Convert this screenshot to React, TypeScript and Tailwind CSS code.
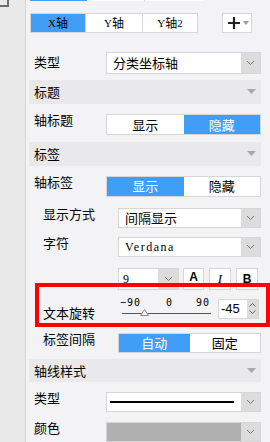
import React from 'react';

const Chevron: React.FC = () => (
  <svg width="9" height="6" viewBox="0 0 9 6" className="block">
    <polyline points="1,1 4.5,4.5 8,1" fill="none" stroke="#777" strokeWidth="1" />
  </svg>
);

const Select: React.FC<{ children?: React.ReactNode; className?: string; fill?: string }> = ({ children, className = '', fill = 'bg-white' }) => (
  <div className={`flex h-full border border-[#d6d6d6] ${className}`}>
    <div className={`flex-1 flex items-center pl-[6px] ${fill}`}>{children}</div>
    <div className="w-[19px] bg-[#dcdcdc] flex items-center justify-center">
      <Chevron />
    </div>
  </div>
);

const Toggle: React.FC<{ left: string; right: string; active: 0 | 1 }> = ({ left, right, active }) => (
  <div className="flex h-full border border-[#d6d6d6] bg-white text-[13px]">
    <div className={`flex-1 flex items-center justify-center ${active === 0 ? 'bg-[#419ef6] text-white' : 'text-black'}`}>{left}</div>
    <div className={`flex-1 flex items-center justify-center ${active === 1 ? 'bg-[#419ef6] text-white' : 'text-black'}`}>{right}</div>
  </div>
);

const Header: React.FC<{ title: string; className?: string }> = ({ title, className = '' }) => (
  <div className={`ml-[3px] mr-[10px] h-[24px] bg-[#e9e9eb] flex items-center justify-between pl-[5px] pr-[5px] text-[13px] ${className}`}>
    <span>{title}</span>
    <svg width="9" height="5" viewBox="0 0 9 5">
      <polygon points="0,0 9,0 4.5,5" fill="#a9a9a9" />
    </svg>
  </div>
);

const Row: React.FC<{ label: string; indent?: boolean; className?: string; children: React.ReactNode }> = ({ label, indent, className = '', children }) => (
  <div className={`flex pr-[10px] ${indent ? 'pl-[17px]' : 'pl-[8px]'} ${className}`}>
    <div className={`${indent ? 'w-[75px]' : 'w-[72px]'} text-[13px] leading-[13px] -mt-[1px]`}>{label}</div>
    <div className="flex-1 h-full">{children}</div>
  </div>
);

const App: React.FC = () => {
  return (
    <div className="relative w-[270px] h-[442px] overflow-hidden flex bg-[#f3f3f5] text-black font-['Noto_Sans_CJK_SC',sans-serif]">
      <div className="w-[26px] shrink-0 bg-[#e9e9e9] border-r border-[#d4d4d4]">
        <div className="w-[9px] h-[7px] border-r-2 border-b-2 border-[#6e6e6e]" />
      </div>

      <div className="flex-1 flex flex-col">
        <div className="flex h-[1px] ml-[4px]">
          <div className="w-[57px] bg-[#419ef6]" />
          <div className="w-[58px] bg-white border-r border-[#d6d6d6]" />
          <div className="w-[58px] bg-white" />
        </div>

        <div className="flex mt-[12px] h-[20px] ml-[4px] pr-[19px] text-[12px]">
          <div className="w-[56px] bg-[#419ef6] border border-[#d6d6d6] flex items-center justify-center">
            <span className="font-['Liberation_Serif',serif] text-[11px]">X</span>轴
          </div>
          <div className="w-[57px] bg-white border border-l-0 border-[#d6d6d6] flex items-center justify-center">
            <span className="font-['Liberation_Serif',serif] text-[11px]">Y</span>轴
          </div>
          <div className="w-[55px] bg-white border border-l-0 border-[#d6d6d6] flex items-center justify-center">
            <span className="font-['Liberation_Serif',serif] text-[11px]">Y</span>轴<span className="font-['Liberation_Serif',serif] text-[11px]">2</span>
          </div>
          <div className="flex-1" />
          <div className="w-[30px] bg-white border border-[#d6d6d6] flex items-center pl-[4px] gap-[2px]">
            <svg width="14" height="14" viewBox="0 0 14 14">
              <path d="M7 1v12M1 7h12" stroke="#222" strokeWidth="2.2" />
            </svg>
            <svg width="6" height="4" viewBox="0 0 6 4">
              <polygon points="0,0 6,0 3,4" fill="#9a9a9a" />
            </svg>
          </div>
        </div>

        <Row label="类型" className="mt-[19px] h-[22px] pt-[4px]">
          <div className="-mt-[4px] h-[22px]">
            <Select><span className="text-[13px]">分类坐标轴</span></Select>
          </div>
        </Row>

        <Header title="标题" className="mt-[6px]" />

        <Row label="轴标题" className="mt-[10px] h-[21px]">
          <Toggle left="显示" right="隐藏" active={1} />
        </Row>

        <Header title="标签" className="mt-[7px]" />

        <Row label="轴标签" className="mt-[10px] h-[21px]">
          <Toggle left="显示" right="隐藏" active={0} />
        </Row>

        <Row label="显示方式" indent className="mt-[11px] h-[20px]">
          <Select><span className="text-[13px]">间隔显示</span></Select>
        </Row>

        <Row label="字符" indent className="mt-[9px] h-[20px]">
          <Select>
            <span className="font-['Liberation_Serif',serif] text-[12px] tracking-[1.5px]">Verdana</span>
          </Select>
        </Row>

        <div className="flex mt-[11px] h-[22px] pl-[92px] pr-[13px]">
          <div className="w-[61px] flex border border-[#d6d6d6]">
            <div className="flex-1 bg-white flex items-center pl-[4px] font-['Liberation_Serif',serif] text-[12px]">9</div>
            <div className="w-[20px] bg-[#dcdcdc] flex items-center justify-center"><Chevron /></div>
          </div>
          <div className="ml-[4px] w-[21px] bg-white border border-[#d6d6d6] flex flex-col items-center justify-center">
            <span className="font-['Liberation_Sans',sans-serif] font-bold text-[12px] leading-[12px]">A</span>
            <div className="w-[12px] h-[2px] bg-black mt-[1px]" />
          </div>
          <div className="ml-[5px] w-[22px] bg-white border border-[#d6d6d6] flex items-center justify-center font-['Liberation_Serif',serif] italic text-[13px]">I</div>
          <div className="ml-[5px] w-[22px] bg-white border border-[#d6d6d6] flex items-center justify-center font-['Liberation_Sans',sans-serif] font-bold text-[12px]">B</div>
        </div>

        <div className="flex mt-[9px] h-[20px] pl-[17px] pr-[12px]">
          <div className="w-[79px] text-[13px] leading-[13px] pt-[7px]">文本旋转</div>
          <div className="w-[89px] flex flex-col">
            <div className="flex font-['DejaVu_Sans_Mono',monospace] text-[10px] leading-[10px] -mt-[1px] tracking-[1px]">
              <span className="-ml-[2px]">−90</span>
              <span className="ml-[25px]">0</span>
              <span className="ml-[23px]">90</span>
            </div>
            <div className="relative mt-[5px] h-[1px] bg-[#555]">
              <svg width="9" height="7" viewBox="0 0 9 7" className="absolute left-[18px] -top-[4px]">
                <polygon points="4.5,0.5 8.5,6.5 0.5,6.5" fill="#fff" stroke="#888" strokeWidth="1" />
              </svg>
            </div>
          </div>
          <div className="ml-[7px] w-[41px] flex border border-[#d6d6d6]">
            <div className="flex-1 bg-white flex items-center pl-[2px] font-['Liberation_Sans',sans-serif] text-[13px]">-45</div>
            <div className="w-[11px] bg-[#dcdcdc] flex flex-col items-center justify-center gap-[3px]">
              <svg width="7" height="4" viewBox="0 0 7 4"><polyline points="0.5,3.5 3.5,0.5 6.5,3.5" fill="none" stroke="#666" /></svg>
              <svg width="7" height="4" viewBox="0 0 7 4"><polyline points="0.5,0.5 3.5,3.5 6.5,0.5" fill="none" stroke="#666" /></svg>
            </div>
          </div>
        </div>

        <Row label="标签间隔" indent className="mt-[14px] h-[20px]">
          <Toggle left="自动" right="固定" active={0} />
        </Row>

        <Header title="轴线样式" className="mt-[6px]" />

        <Row label="类型" className="mt-[10px] h-[20px]">
          <Select>
            <div className="w-[124px] h-[2px] bg-black -ml-[3px]" />
          </Select>
        </Row>

        <Row label="颜色" className="mt-[10px] h-[20px]">
          <Select fill="bg-[#b0b0b0]" />
        </Row>
      </div>

      <div className="absolute left-[35px] top-[283px] w-[235px] h-[44px] border-4 border-[#ff0000]" />
    </div>
  );
};

export default App;
